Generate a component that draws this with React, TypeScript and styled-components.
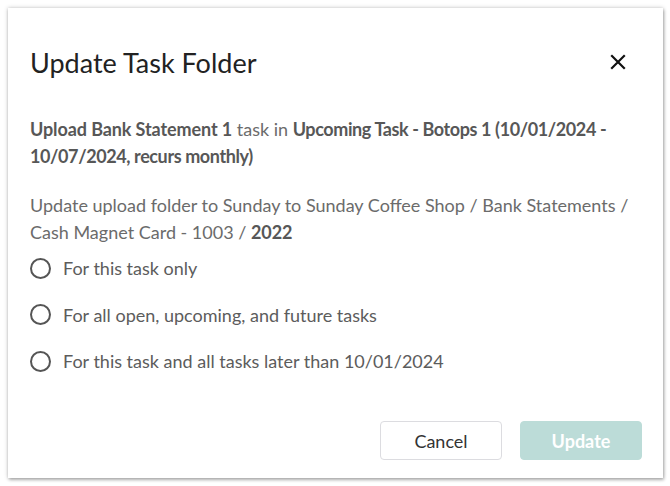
import React, {FC, useState} from 'react';
import styled, {createGlobalStyle} from 'styled-components';

const GlobalStyle = createGlobalStyle`
    html, body {
        margin: 0;
        padding: 0;
        background: #ffffff;
    }
    body {
        font-family: Lato, "Open Sans", "Liberation Sans", sans-serif;
    }
`;

const Page = styled.div`
    width: 670px;
    height: 486px;
    padding: 8px 7px 8px 8px;
    box-sizing: border-box;
`;

const Dialog = styled.div`
    height: 470px;
    background: #ffffff;
    box-shadow: 0 0 4px rgba(0, 0, 0, 0.25), 1px 2px 3px rgba(0, 0, 0, 0.25);
    padding: 30px 21px 18px 22px;
    box-sizing: border-box;
    display: flex;
    flex-direction: column;
`;

const Header = styled.div`
    display: flex;
    align-items: center;
    justify-content: space-between;
    height: 48px;
`;

const Title = styled.h2`
    margin: 0;
    font-size: 27px;
    font-weight: 400;
    color: #222222;
`;

const CloseButton = styled.button`
    border: none;
    background: none;
    padding: 0;
    width: 32px;
    height: 32px;
    display: flex;
    align-items: center;
    justify-content: center;
    margin-right: 8px;
    cursor: pointer;
`;

const Text = styled.p<{$gap: number}>`
    margin: ${({$gap}) => $gap}px 0 0;
    font-size: 18px;
    line-height: 26.5px;
    color: #6b6b6b;
`;

const Strong = styled.b<{$tight?: boolean}>`
    color: #575757;
    font-weight: 700;
    letter-spacing: ${({$tight}) => ($tight ? '-0.4px' : '-0.1px')};
`;

const Options = styled.div`
    display: flex;
    flex-direction: column;
`;

const Option = styled.label`
    display: flex;
    align-items: center;
    gap: 12px;
    height: 46.5px;
    font-size: 18px;
    color: #5c5c5c;
    cursor: pointer;
`;

const Radio = styled.span<{$checked: boolean}>`
    width: 21px;
    height: 21px;
    box-sizing: border-box;
    border-radius: 50%;
    border: 2px solid #555555;
    display: flex;
    align-items: center;
    justify-content: center;

    &::after {
        content: '';
        width: 11px;
        height: 11px;
        border-radius: 50%;
        background: #555555;
        display: ${({$checked}) => ($checked ? 'block' : 'none')};
    }
`;

const Footer = styled.div`
    margin-top: auto;
    display: flex;
    justify-content: flex-end;
    gap: 18px;
`;

const Button = styled.button<{$primary?: boolean}>`
    width: 122px;
    height: 39px;
    border-radius: 4px;
    font-family: inherit;
    font-size: 18px;
    font-weight: ${({$primary}) => ($primary ? 700 : 400)};
    color: ${({$primary}) => ($primary ? '#ffffff' : '#333333')};
    background: ${({$primary}) => ($primary ? '#bcdcd8' : '#ffffff')};
    border: 1px solid ${({$primary}) => ($primary ? '#bcdcd8' : '#dcdce0')};
    cursor: pointer;
`;

const options = [
    {code: 'this', label: 'For this task only'},
    {code: 'all', label: 'For all open, upcoming, and future tasks'},
    {code: 'later', label: 'For this task and all tasks later than 10/01/2024'},
];

const App: FC = () => {
    const [selected, setSelected] = useState<string>();

    return (
        <Page>
            <GlobalStyle />
            <Dialog>
                <Header>
                    <Title>Update Task Folder</Title>
                    <CloseButton aria-label="Close">
                        <svg width="16" height="16" viewBox="0 0 16 16">
                            <path d="M2 2L14 14M14 2L2 14" stroke="#111" strokeWidth="2.2" strokeLinecap="square" />
                        </svg>
                    </CloseButton>
                </Header>
                <Text $gap={30}>
                    <Strong>Upload Bank Statement 1</Strong> task in{' '}
                    <Strong $tight>Upcoming Task - Botops 1 (10/01/2024 - 10/07/2024, recurs monthly)</Strong>
                </Text>
                <Text $gap={23}>
                    Update upload folder to Sunday to Sunday Coffee Shop / Bank Statements / Cash Magnet Card - 1003 /{' '}
                    <Strong>2022</Strong>
                </Text>
                <Options>
                    {options.map(option => (
                        <Option key={option.code} onClick={() => setSelected(option.code)}>
                            <Radio $checked={selected === option.code} />
                            {option.label}
                        </Option>
                    ))}
                </Options>
                <Footer>
                    <Button>Cancel</Button>
                    <Button $primary>Update</Button>
                </Footer>
            </Dialog>
        </Page>
    );
};

export default App;
